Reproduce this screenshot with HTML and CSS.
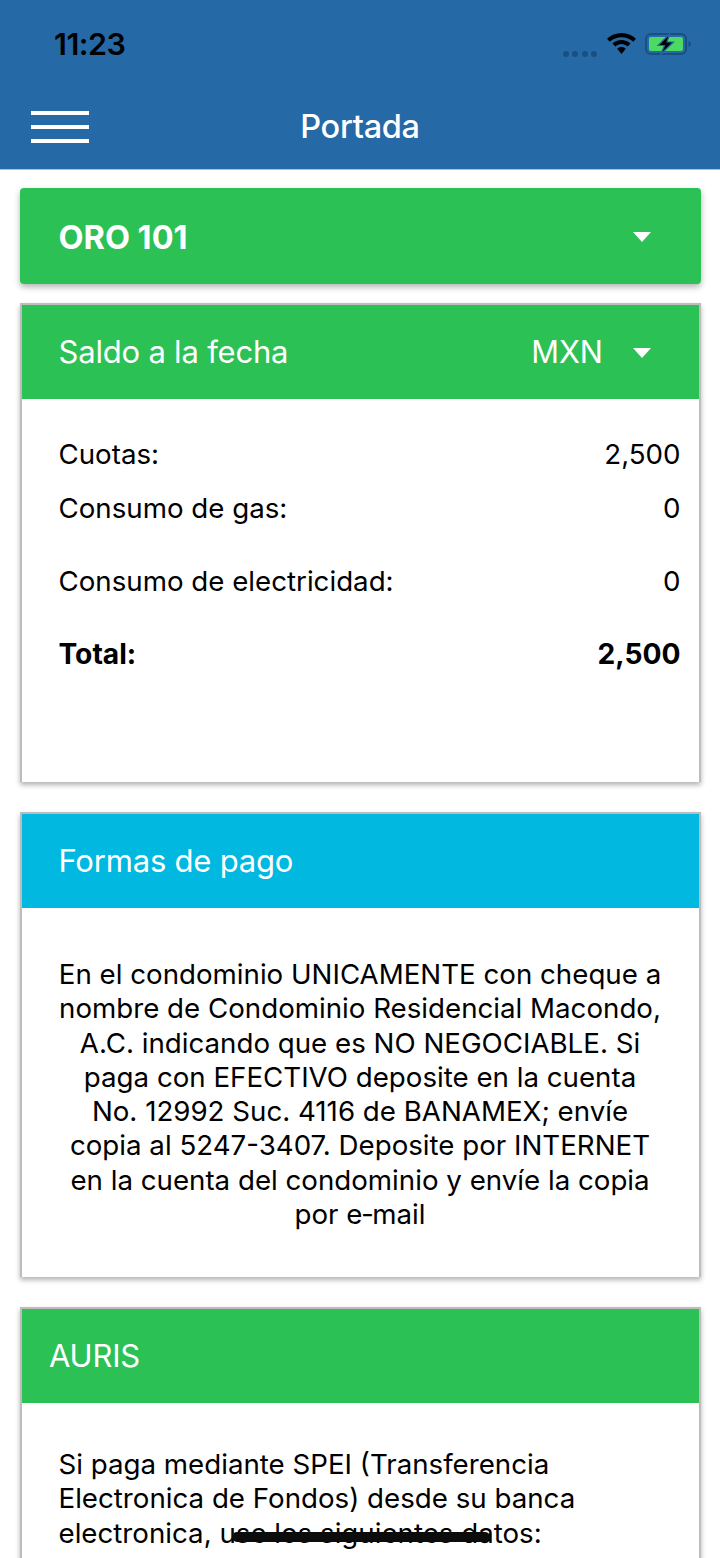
FILE: index.html
```html
<!DOCTYPE html>
<html lang="es">
<head>
<meta charset="utf-8">
<title>Portada</title>
<link rel="stylesheet" href="styles.css">
</head>
<body>
<div class="screen">
  <header class="appbar">
    <div class="status">
      <span class="time">11:23</span>
      <div class="status-icons">
        <svg class="dots" width="34" height="6" viewBox="0 0 34 6"><g fill="#1b4f80"><circle cx="3" cy="3" r="3"/><circle cx="12" cy="3" r="3"/><circle cx="22" cy="3" r="3"/><circle cx="31" cy="3" r="3"/></g></svg>
        <svg class="wifi" width="29" height="21" viewBox="0 0 29 21"><path d="M14.5 0C9 0 4 2.100 0 5.800L2.800 8.800C6 5.800 10 4.200 14.500 4.200S23 5.800 26.200 8.800L29 5.800C25 2.100 20 0 14.500 0Z" fill="#000"/><path d="M14.500 7C11 7 8 8.300 5.500 10.600L8.300 13.600C10 12 12.100 11.100 14.500 11.100S19 12 20.700 13.600L23.500 10.600C21 8.300 18 7 14.500 7Z" fill="#000"/><path d="M14.500 14C12.800 14 11.300 14.600 10.200 15.700L14.500 21L18.800 15.700C17.700 14.600 16.200 14 14.500 14Z" fill="#000"/></svg>
        <svg class="battery" width="46" height="22" viewBox="0 0 46 22"><rect x="1" y="1" width="40" height="20" rx="5" fill="none" stroke="#1b4f80" stroke-width="2"/><rect x="4" y="4" width="34" height="14" rx="2" fill="#4cd964"/><path d="M43.500 8V14C45 13.500 46 12.500 46 11S45 8.500 43.500 8Z" fill="#1b4f80"/><path d="M25 0.500L13 12.500H19.500L15.500 21.500L28.500 9H22Z" fill="#000" stroke="#2569a6" stroke-width="1.200"/></svg>
      </div>
    </div>
    <div class="navbar">
      <div class="burger"><span class="bar"></span><span class="bar"></span><span class="bar"></span></div>
      <h1 class="title">Portada</h1>
    </div>
  </header>

  <main class="content">
    <div class="selector">
      <span class="selector-name">ORO 101</span>
      <span class="caret"></span>
    </div>

    <section class="card card-balance">
      <div class="card-head green">
        <span class="head-text">Saldo a la fecha</span>
        <span class="currency">MXN</span>
        <span class="caret"></span>
      </div>
      <div class="rows">
        <div class="row row-first"><span>Cuotas:</span><span>2,500</span></div>
        <div class="row row-second"><span>Consumo de gas:</span><span>0</span></div>
        <div class="row row-tall"><span>Consumo de electricidad:</span><span>0</span></div>
        <div class="row row-tall row-total"><span>Total:</span><span>2,500</span></div>
      </div>
    </section>

    <section class="card card-pay">
      <div class="card-head blue"><span class="head-text">Formas de pago</span></div>
      <p class="para centered">En el condominio UNICAMENTE con cheque a nombre de Condominio Residencial Macondo, A.C. indicando que es NO NEGOCIABLE. Si paga con EFECTIVO deposite en la cuenta No. 12992 Suc. 4116 de BANAMEX; envíe copia al 5247-3407. Deposite por INTERNET en la cuenta del condominio y envíe la copia por e&#8209;mail</p>
    </section>

    <section class="card card-auris">
      <div class="card-head green head-tight"><span class="head-text">AURIS</span></div>
      <p class="para para-left">Si paga mediante SPEI (Transferencia Electronica de Fondos) desde su banca electronica, use los siguientes datos:</p>
    </section>
  </main>
  <div class="home-indicator"></div>
</div>
</body>
</html>
```

FILE: styles.css
```css
* { box-sizing: border-box; }
html, body { margin: 0; padding: 0; background: #fff; }
body { font-family: Inter, "Liberation Sans", sans-serif; color: #000; }
.screen { position: relative; width: 720px; height: 1558px; overflow: hidden; background: #fff; }

.appbar { height: 170px; background: #2569a6; border-bottom: 1px solid #a9c3dc; }
.status { height: 88px; display: flex; justify-content: space-between; padding: 25px 29px 0 54px; }
.time { font-size: 30.5px; font-weight: 600; line-height: 38px; color: #000; letter-spacing: -0.5px; }
.status-icons { display: flex; align-items: flex-start; padding-top: 8px; }
.dots { margin-top: 18px; margin-right: 10px; }
.wifi { margin-right: 9px; }
.navbar { position: relative; height: 81px; display: flex; align-items: center; justify-content: center; }
.burger { position: absolute; left: 31px; top: 23px; width: 58px; display: flex; flex-direction: column; gap: 10.5px; }
.bar { display: block; height: 3.5px; background: #fff; }
.title { margin: 0; font-size: 32.5px; font-weight: 500; line-height: 40px; color: #fff; letter-spacing: -0.3px; position: relative; top: -2px; }

.content { padding: 18px 19.5px 0; display: flex; flex-direction: column; }
.selector { height: 96px; background: #2bc155; border-radius: 4px; box-shadow: 0 3px 6px rgba(0,0,0,.3); display: flex; align-items: center; justify-content: space-between; padding: 0 49.5px 0 39px; }
.selector-name { font-size: 32.5px; font-weight: 700; color: #fff; letter-spacing: 0; padding-top: 2px; }
.caret { width: 0; height: 0; margin-top: 2px; border-left: 9px solid transparent; border-right: 9px solid transparent; border-top: 10px solid #fff; }

.card { background: #fff; border: 2px solid #bdbdbd; border-bottom: 0; box-shadow: 0 3px 5px rgba(0,0,0,.3); }
.card-balance { margin-top: 19px; height: 479px; }
.card-pay { margin-top: 30px; height: 465px; }
.card-auris { margin-top: 30px; height: 400px; }

.card-head { height: 94px; display: flex; align-items: center; padding: 0 47.5px 0 37px; color: #fff; }
.green { background: #2bc155; }
.blue { background: #00b8e0; }
.head-tight { padding-left: 27.5px; }
.head-text { font-size: 31px; font-weight: 400; letter-spacing: -0.2px; flex: 1; padding-bottom: 2px; }
.currency { font-size: 30.7px; margin-right: 30px; letter-spacing: 0; padding-bottom: 2px; }

.rows { padding: 0 18px 0 37px; font-size: 27.7px; }
.row { display: flex; justify-content: space-between; line-height: 34px; }
.row-first { padding-top: 38px; }
.row-second { padding-top: 20px; }
.row-tall { padding-top: 39px; }
.row-total { font-size: 28.2px; font-weight: 700; }

.para { margin: 0; padding: 49px 37px 0 37px; font-size: 27.7px; line-height: 34.3px; }
.centered { text-align: center; }
.para-left { padding: 44px 30px 0 37px; }

.home-indicator { position: absolute; left: 232px; top: 1532px; width: 258px; height: 10px; border-radius: 5px; background: #0c0c0c; }
```
